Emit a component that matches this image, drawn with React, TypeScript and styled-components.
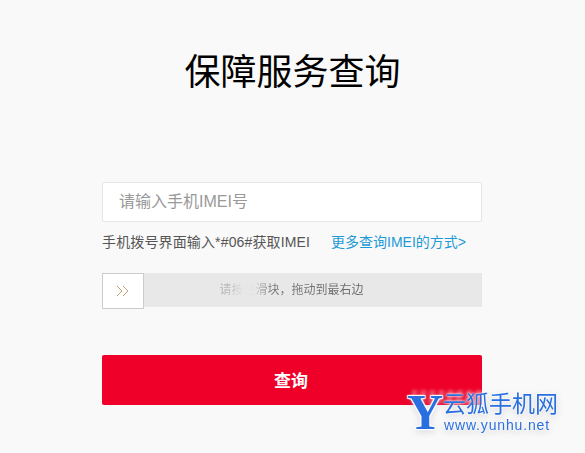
import React from "react";
import styled, { createGlobalStyle } from "styled-components";

const GlobalStyle = createGlobalStyle`
  html, body {
    margin: 0;
    padding: 0;
    background: #f9f9f9;
  }
  body {
    font-family: "Liberation Sans", "Noto Sans CJK SC", sans-serif;
  }
`;

const Page = styled.div`
  position: relative;
  width: 585px;
  height: 453px;
  overflow: hidden;
  background: #f9f9f9;
  display: flex;
  flex-direction: column;
  align-items: center;
`;

const Title = styled.h1`
  margin: 51px 0 0;
  font-size: 36px;
  line-height: 44px;
  font-weight: 400;
  color: #000;
  width: 380px;
  text-align: center;
`;

const Form = styled.div`
  width: 380px;
  margin-top: 87px;
  margin-left: -1px;
  display: flex;
  flex-direction: column;
`;

const ImeiInput = styled.input`
  box-sizing: border-box;
  width: 380px;
  height: 40px;
  padding: 0 16px;
  background: #fff;
  border: 1px solid #e6e6e6;
  border-radius: 2px;
  font: 16px "Liberation Sans", "Noto Sans CJK SC", sans-serif;
  outline: none;
  &::placeholder {
    color: #999;
    opacity: 1;
  }
`;

const HintRow = styled.div`
  display: flex;
  margin-top: 11px;
  font-size: 14px;
  line-height: 18px;
  white-space: nowrap;
`;

const Hint = styled.span`
  color: #555;
  letter-spacing: 0.14px;
`;

const MoreLink = styled.a`
  margin-left: 21px;
  color: #1e9ad6;
  text-decoration: none;
`;

const Slider = styled.div`
  position: relative;
  display: flex;
  align-items: center;
  justify-content: center;
  height: 34px;
  margin-top: 22px;
  background: #e8e8e8;
`;

const SliderHint = styled.span`
  font-size: 12px;
  line-height: 34px;
  margin-right: 1px;
  color: transparent;
  background: linear-gradient(90deg, #aaa 0%, #c4c4c4 10%, #e8e8e8 17%, #e0e0e0 24%, #777 36%, #666 100%);
  -webkit-background-clip: text;
  background-clip: text;
`;

const SliderHandle = styled.div`
  position: absolute;
  left: 0;
  top: 0;
  box-sizing: border-box;
  width: 42px;
  height: 36px;
  background: #fff;
  border: 1px solid #ccc;
  display: flex;
  align-items: center;
  justify-content: center;
`;

const SubmitButton = styled.button`
  height: 50px;
  margin-top: 48px;
  padding: 0 2px 2px 0;
  border: none;
  border-radius: 2px;
  background: #ee0028;
  color: #fff;
  font: 700 17px "Liberation Sans", "Noto Sans CJK SC", sans-serif;
`;

const Watermark = styled.div`
  position: absolute;
  left: 407px;
  top: 390px;
  display: flex;
  align-items: flex-start;
  width: 172px;
  filter: drop-shadow(0 2px 3px rgba(120, 120, 120, 0.22));
`;

const WatermarkGhost = styled.div`
  position: absolute;
  left: 412px;
  top: 390px;
  width: 122px;
  height: 14px;
  background: repeating-linear-gradient(
    100deg,
    rgba(255, 255, 255, 0.3) 0 5px,
    rgba(255, 255, 255, 0.06) 5px 9px
  );
  filter: blur(1.5px);
`;

const WatermarkY = styled.span`
  font-family: "Liberation Serif", serif;
  font-weight: 700;
  font-size: 50px;
  line-height: 44px;
  width: 36px;
  color: #2a6fe0;
  text-shadow: 0 0 2px #fff, 1px 1px 1px #fff, -1px -1px 1px #fff, 1px -1px 1px #fff, -1px 1px 1px #fff;
`;

const WatermarkText = styled.div`
  display: flex;
  flex-direction: column;
  color: #2a6fe0;
  text-shadow: 0 0 2px #fff, 0 0 3px #fff;
  white-space: nowrap;
`;

const WatermarkName = styled.span`
  font-size: 23px;
  line-height: 26px;
  font-weight: 400;
  margin-top: 1px;
`;

const WatermarkUrl = styled.span`
  font-size: 14px;
  line-height: 16px;
  margin-left: 1px;
  letter-spacing: 0.85px;
`;

const App = () => {
  return (
    <Page>
      <GlobalStyle />
      <Title>保障服务查询</Title>
      <Form>
        <ImeiInput placeholder="请输入手机IMEI号" />
        <HintRow>
          <Hint>手机拨号界面输入*#06#获取IMEI</Hint>
          <MoreLink href="#">更多查询IMEI的方式&gt;</MoreLink>
        </HintRow>
        <Slider>
          <SliderHandle>
            <svg width="14" height="12" viewBox="0 0 14 12" fill="none" stroke="#c99f7c" strokeWidth="1">
              <path d="M1 1l5 5-5 5" />
              <path d="M7 1l5 5-5 5" />
            </svg>
          </SliderHandle>
          <SliderHint>请按住滑块，拖动到最右边</SliderHint>
        </Slider>
        <SubmitButton>查询</SubmitButton>
      </Form>
      <WatermarkGhost />
      <Watermark>
        <WatermarkY>Y</WatermarkY>
        <WatermarkText>
          <WatermarkName>云狐手机网</WatermarkName>
          <WatermarkUrl>www.yunhu.net</WatermarkUrl>
        </WatermarkText>
      </Watermark>
    </Page>
  );
};

export default App;
